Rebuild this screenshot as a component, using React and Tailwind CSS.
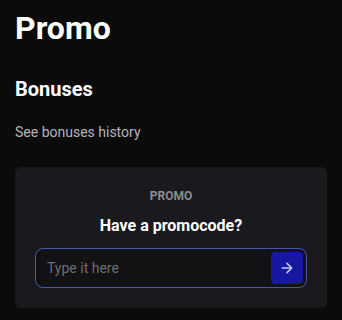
import React from 'react';

export default function App() {
  return (
    <div className="min-h-screen bg-[#0b0b0c] px-[15px] pt-[8px] font-['Roboto',sans-serif]">
      <h1 className="text-[32px] font-bold text-white leading-[40px]">Promo</h1>
      <h2 className="mt-[28px] text-[20px] font-bold text-white leading-[26px]">Bonuses</h2>
      <p className="mt-[20px] text-[14px] text-[#b4b4b8] leading-[20px]">See bonuses history</p>

      <div className="mt-[25px] rounded-md bg-[#1a1a1e] px-[20px] pt-[21px] pb-[20px] flex flex-col items-center">
        <div className="text-[12px] font-bold uppercase text-[#8b8b90] leading-[16px]">Promo</div>
        <div className="mt-[11px] text-[16px] font-bold text-white leading-[22px]">Have a promocode?</div>
        <div className="mt-[11px] w-full h-[40px] rounded-lg border border-[#4658b0] bg-[#121215] flex items-center pl-[11px] pr-[3px]">
          <input
            className="flex-1 min-w-0 bg-transparent outline-none text-[14px] text-white placeholder:text-[#6d6d72]"
            placeholder="Type it here"
          />
          <button className="w-[32px] h-[32px] rounded bg-[#1717a3] flex items-center justify-center">
            <svg width="16" height="16" viewBox="0 0 24 24" fill="none" stroke="#c5c8ea" strokeWidth="2.5" strokeLinecap="round" strokeLinejoin="round">
              <path d="M5 12h14M12 5l7 7-7 7" />
            </svg>
          </button>
        </div>
      </div>
    </div>
  );
}
